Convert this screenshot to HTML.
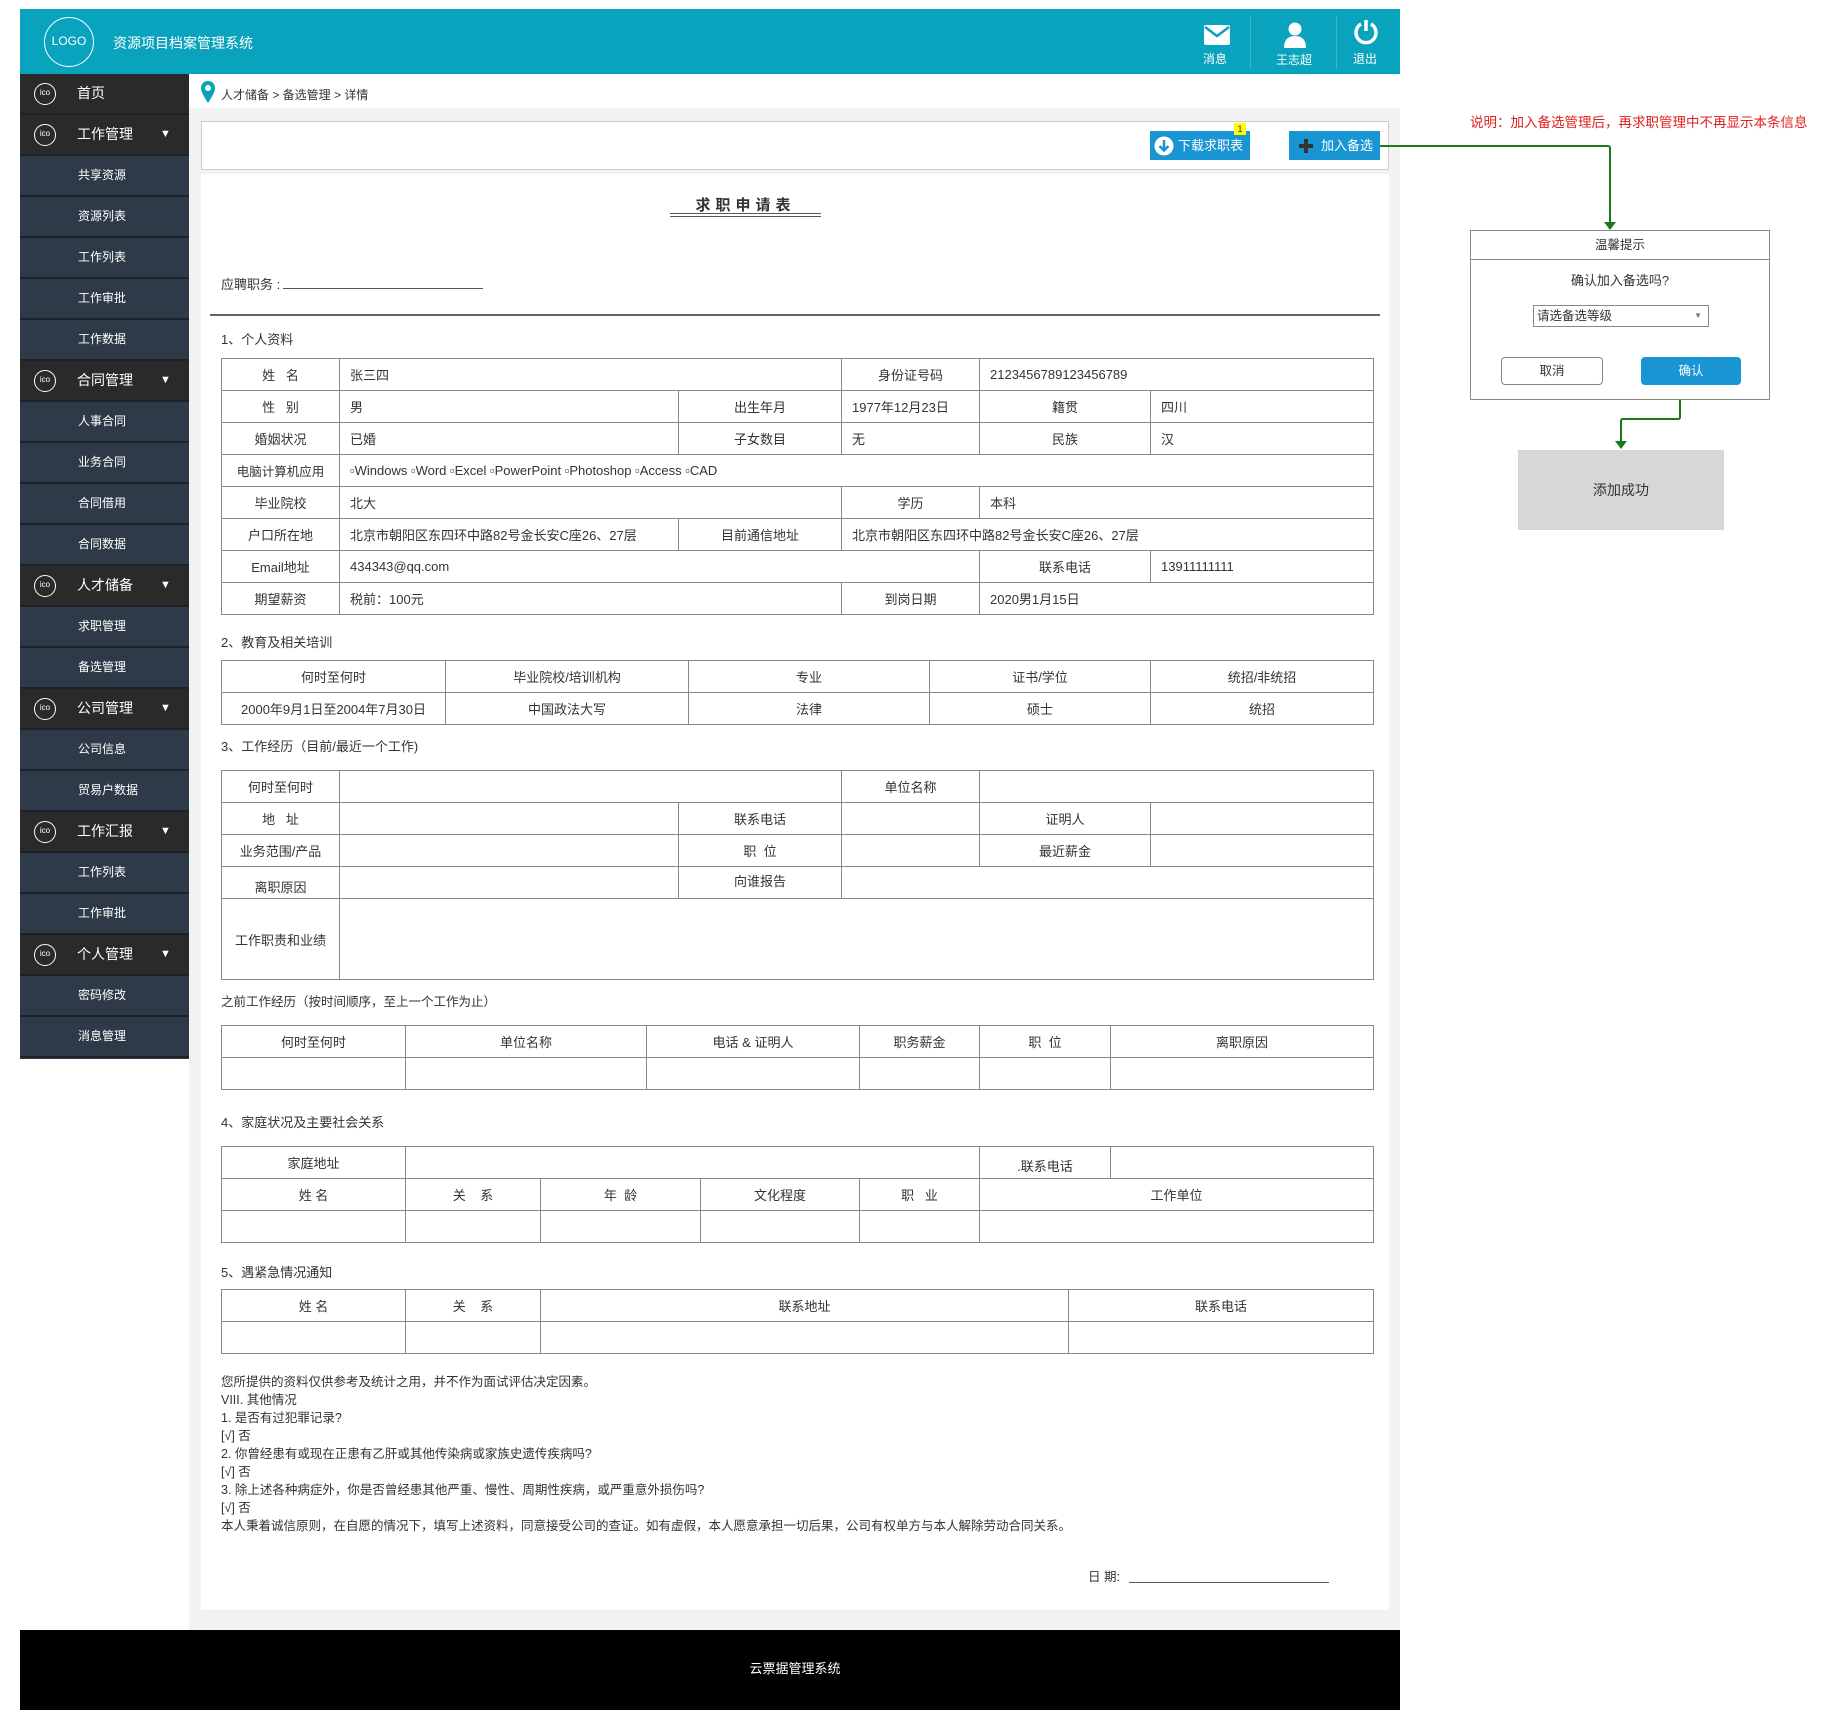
<!DOCTYPE html>
<html><head><meta charset="utf-8">
<style>
*{margin:0;padding:0;box-sizing:border-box}
body{width:1821px;height:1710px;background:#fff;position:relative;font-family:"Liberation Sans","Noto Sans CJK SC",sans-serif;color:#333;overflow:hidden}
.abs{position:absolute}
.hdr{left:20px;top:9px;width:1380px;height:65px;background:#0aa3bd;color:#fff}
.logo{left:24px;top:8px;width:50px;height:50px;border:1.5px solid #fff;border-radius:50%;font-size:12px;text-align:center;line-height:47px}
.side{left:20px;top:74px;width:169px;height:985px;background:#2e3a47}
.side div{height:41px;border-bottom:2px solid #1c2229;color:#fff;font-size:12px;line-height:39px;padding-left:58px;position:relative}
.side div.m{background:#2a2a2a;font-size:14px;padding-left:57px}
.side div.m:before{content:"ico";position:absolute;left:14px;top:9px;width:20px;height:20px;border:1px solid #fff;border-radius:50%;font-size:8px;line-height:18px;text-align:center;padding:0}
.side div.a:after{content:"▼";position:absolute;left:140px;top:0;font-size:11px}
.gray{left:189px;top:108px;width:1211px;height:1522px;background:#f2f2f2}
table{border-collapse:collapse;table-layout:fixed;position:absolute;left:221px;width:1152px;font-size:13px}
td{border:1px solid #888;height:32px;text-align:center;padding:0 4px;white-space:nowrap;overflow:hidden}
td.l{text-align:left;padding-left:10px}
.lbl{position:absolute;left:221px;font-size:13px}
.txt{left:221px;top:1373px;font-size:12.5px;line-height:18px;color:#333}
</style></head><body>
<div class="abs hdr">
 <div class="abs logo">LOGO</div>
 <div class="abs" style="left:93px;top:24px;font-size:14px">资源项目档案管理系统</div>
 <div class="abs" style="left:1230px;top:6px;width:1px;height:54px;background:#3bb6cc"></div>
 <div class="abs" style="left:1316px;top:6px;width:1px;height:54px;background:#3bb6cc"></div>
 <svg class="abs" style="left:1184px;top:16px" width="26" height="20" viewBox="0 0 26 20"><rect x="0" y="0" width="26" height="20" rx="2" fill="#fff"/><path d="M1 2 L13 11 L25 2" stroke="#0aa3bd" stroke-width="2.5" fill="none"/></svg>
 <div class="abs" style="left:1183px;top:41px;font-size:12px">消息</div>
 <svg class="abs" style="left:1263px;top:13px" width="24" height="26" viewBox="0 0 24 26"><circle cx="12" cy="7" r="6.5" fill="#fff"/><path d="M1 26 Q1 14 12 14 Q23 14 23 26Z" fill="#fff"/></svg>
 <div class="abs" style="left:1256px;top:42px;font-size:12px">王志超</div>
 <svg class="abs" style="left:1333px;top:10px" width="26" height="26" viewBox="0 0 26 26"><path d="M8 5 A10 10 0 1 0 18 5" stroke="#fff" stroke-width="3.5" fill="none"/><line x1="13" y1="1" x2="13" y2="12" stroke="#fff" stroke-width="3.5"/></svg>
 <div class="abs" style="left:1333px;top:41px;font-size:12px">退出</div>
</div>
<div class="abs side">
 <div class="m">首页</div><div class="m a">工作管理</div>
 <div>共享资源</div><div>资源列表</div><div>工作列表</div><div>工作审批</div><div>工作数据</div>
 <div class="m a">合同管理</div><div>人事合同</div><div>业务合同</div><div>合同借用</div><div>合同数据</div>
 <div class="m a">人才储备</div><div>求职管理</div><div>备选管理</div>
 <div class="m a">公司管理</div><div>公司信息</div><div>贸易户数据</div>
 <div class="m a">工作汇报</div><div>工作列表</div><div>工作审批</div>
 <div class="m a">个人管理</div><div>密码修改</div><div>消息管理</div>
</div>
<svg class="abs" style="left:201px;top:81px" width="14" height="22" viewBox="0 0 14 22"><path d="M7 0 A7 7 0 0 1 14 7 C14 12 7 22 7 22 C7 22 0 12 0 7 A7 7 0 0 1 7 0Z" fill="#0aa3bd"/><circle cx="7" cy="7" r="3" fill="#fff"/></svg>
<div class="abs" style="left:221px;top:86px;font-size:12px">人才储备 &gt; 备选管理 &gt; 详情</div>
<div class="abs gray"></div>
<div class="abs" style="left:201px;top:121px;width:1188px;height:49px;background:#fff;border:1px solid #ccc"></div>
<div class="abs" style="left:1150px;top:131px;width:100px;height:29px;background:#1a95d3;color:#fff;font-size:13px;line-height:29px;padding-left:28px">下载求职表</div>
<svg class="abs" style="left:1154px;top:136px" width="20" height="20" viewBox="0 0 20 20"><circle cx="10" cy="10" r="9.5" fill="#fff"/><path d="M10 4 V14 M5.5 10 L10 14.5 L14.5 10" stroke="#1a95d3" stroke-width="2.5" fill="none"/></svg>
<div class="abs" style="left:1234px;top:123px;width:12px;height:12px;background:#ff0;font-size:9px;text-align:center;line-height:12px;color:#333">1</div>
<div class="abs" style="left:1289px;top:131px;width:91px;height:29px;background:#1a95d3;color:#fff;font-size:13px;line-height:29px;padding-left:32px">加入备选</div>
<svg class="abs" style="left:1298px;top:138px" width="16" height="16" viewBox="0 0 16 16"><path d="M8 1V15M1 8H15" stroke="#333" stroke-width="4"/></svg>
<div class="abs" style="left:201px;top:174px;width:1188px;height:1436px;background:#fff"></div>
<div class="abs" style="left:670px;top:194px;width:151px;text-align:center;font-size:15px;font-weight:bold;letter-spacing:5px">求职申请表</div>
<div class="abs" style="left:670px;top:213px;width:151px;height:4px;border-top:1px solid #555;border-bottom:1px solid #555"></div>
<div class="lbl" style="top:274px">应聘职务 :</div>
<div class="abs" style="left:283px;top:288px;width:200px;border-top:1px solid #555"></div>
<div class="abs" style="left:210px;top:314px;width:1170px;border-top:2px solid #666"></div>
<div class="lbl" style="top:329px">1、个人资料</div>
<table style="top:358px">
<colgroup><col style="width:118px"><col style="width:339px"><col style="width:163px"><col style="width:138px"><col style="width:171px"><col style="width:223px"></colgroup>
<tr><td>姓&nbsp;&nbsp;&nbsp;名</td><td colspan="2" class="l">张三四</td><td>身份证号码</td><td colspan="2" class="l">2123456789123456789</td></tr>
<tr><td>性&nbsp;&nbsp;&nbsp;别</td><td class="l">男</td><td>出生年月</td><td class="l">1977年12月23日</td><td>籍贯</td><td class="l">四川</td></tr>
<tr><td>婚姻状况</td><td class="l">已婚</td><td>子女数目</td><td class="l">无</td><td>民族</td><td class="l">汉</td></tr>
<tr><td style="font-size:12.5px;padding:0">电脑计算机应用</td><td colspan="5" class="l">▫Windows ▫Word ▫Excel ▫PowerPoint ▫Photoshop ▫Access ▫CAD</td></tr>
<tr><td>毕业院校</td><td colspan="2" class="l">北大</td><td>学历</td><td colspan="2" class="l">本科</td></tr>
<tr><td>户口所在地</td><td class="l">北京市朝阳区东四环中路82号金长安C座26、27层</td><td>目前通信地址</td><td colspan="3" class="l">北京市朝阳区东四环中路82号金长安C座26、27层</td></tr>
<tr><td>Email地址</td><td colspan="3" class="l">434343@qq.com</td><td>联系电话</td><td class="l">13911111111</td></tr>
<tr><td>期望薪资</td><td colspan="2" class="l">税前：100元</td><td>到岗日期</td><td colspan="2" class="l">2020男1月15日</td></tr>
</table>
<div class="lbl" style="top:632px">2、教育及相关培训</div>
<table style="top:660px">
<colgroup><col style="width:224px"><col style="width:243px"><col style="width:241px"><col style="width:221px"><col style="width:223px"></colgroup>
<tr><td>何时至何时</td><td>毕业院校/培训机构</td><td>专业</td><td>证书/学位</td><td>统招/非统招</td></tr>
<tr><td>2000年9月1日至2004年7月30日</td><td>中国政法大写</td><td>法律</td><td>硕士</td><td>统招</td></tr>
</table>
<div class="lbl" style="top:736px">3、工作经历（目前/最近一个工作)</div>
<table style="top:770px">
<colgroup><col style="width:118px"><col style="width:339px"><col style="width:163px"><col style="width:138px"><col style="width:171px"><col style="width:223px"></colgroup>
<tr><td>何时至何时</td><td colspan="2"></td><td>单位名称</td><td colspan="2"></td></tr>
<tr><td>地&nbsp;&nbsp;&nbsp;址</td><td></td><td>联系电话</td><td></td><td>证明人</td><td></td></tr>
<tr><td>业务范围/产品</td><td></td><td>职&nbsp;&nbsp;位</td><td></td><td>最近薪金</td><td></td></tr>
<tr><td style="padding-top:8px">离职原因</td><td></td><td style="vertical-align:top;padding-top:4px">向谁报告</td><td colspan="3"></td></tr>
<tr><td style="height:81px">工作职责和业绩</td><td colspan="5"></td></tr>
</table>
<div class="lbl" style="top:991px;font-size:12.5px">之前工作经历（按时间顺序，至上一个工作为止）</div>
<table style="top:1025px">
<colgroup><col style="width:184px"><col style="width:241px"><col style="width:213px"><col style="width:120px"><col style="width:131px"><col style="width:263px"></colgroup>
<tr><td>何时至何时</td><td>单位名称</td><td>电话 &amp; 证明人</td><td>职务薪金</td><td>职&nbsp;&nbsp;位</td><td>离职原因</td></tr>
<tr><td></td><td></td><td></td><td></td><td></td><td></td></tr>
</table>
<div class="lbl" style="top:1112px">4、家庭状况及主要社会关系</div>
<table style="top:1146px">
<colgroup><col style="width:184px"><col style="width:135px"><col style="width:160px"><col style="width:159px"><col style="width:120px"><col style="width:131px"><col style="width:263px"></colgroup>
<tr><td>家庭地址</td><td colspan="4"></td><td style="padding-top:6px">.联系电话</td><td></td></tr>
<tr><td>姓 名</td><td>关&nbsp;&nbsp;&nbsp;&nbsp;系</td><td>年&nbsp;&nbsp;龄</td><td>文化程度</td><td>职&nbsp;&nbsp;&nbsp;业</td><td colspan="2">工作单位</td></tr>
<tr><td></td><td></td><td></td><td></td><td></td><td colspan="2"></td></tr>
</table>
<div class="lbl" style="top:1262px">5、遇紧急情况通知</div>
<table style="top:1289px">
<colgroup><col style="width:184px"><col style="width:135px"><col style="width:528px"><col style="width:305px"></colgroup>
<tr><td>姓 名</td><td>关&nbsp;&nbsp;&nbsp;&nbsp;系</td><td>联系地址</td><td>联系电话</td></tr>
<tr><td></td><td></td><td></td><td></td></tr>
</table>
<div class="abs txt">您所提供的资料仅供参考及统计之用，并不作为面试评估决定因素。<br>VIII. 其他情况<br>1. 是否有过犯罪记录?<br>[√] 否<br>2. 你曾经患有或现在正患有乙肝或其他传染病或家族史遗传疾病吗?<br>[√] 否<br>3. 除上述各种病症外，你是否曾经患其他严重、慢性、周期性疾病，或严重意外损伤吗?<br>[√] 否<br>本人秉着诚信原则，在自愿的情况下，填写上述资料，同意接受公司的查证。如有虚假，本人愿意承担一切后果，公司有权单方与本人解除劳动合同关系。</div>
<div class="abs" style="left:1088px;top:1566px;font-size:12.5px">日 期:</div>
<div class="abs" style="left:1129px;top:1582px;width:200px;border-top:1px solid #555"></div>
<div class="abs" style="left:20px;top:1630px;width:1380px;height:80px;background:#000"></div>
<div class="abs" style="left:695px;top:1630px;width:200px;height:80px;color:#fff;font-size:13px;text-align:center;line-height:78px">云票据管理系统</div>
<div class="abs" style="left:1470px;top:111px;font-size:13.5px;color:#e02020;white-space:nowrap">说明：加入备选管理后，再求职管理中不再显示本条信息</div>
<svg class="abs" style="left:0;top:0" width="1821" height="1710" viewBox="0 0 1821 1710" pointer-events="none">
<path d="M1380 146 H1608 Q1610 146 1610 148 V222" stroke="#1a7a1a" stroke-width="2" fill="none"/>
<path d="M1604 222 L1616 222 L1610 230Z" fill="#1a7a1a"/>
<path d="M1680 400 V417 Q1680 419 1678 419 H1623 Q1621 419 1621 421 V441" stroke="#1a7a1a" stroke-width="2" fill="none"/>
<path d="M1615 441 L1627 441 L1621 449Z" fill="#1a7a1a"/>
</svg>
<div class="abs" style="left:1470px;top:230px;width:300px;height:170px;border:1px solid #888;background:#fff">
 <div style="height:29px;border-bottom:1px solid #888;text-align:center;line-height:28px;font-size:12.5px">温馨提示</div>
 <div style="text-align:center;font-size:13px;margin-top:10px">确认加入备选吗?</div>
 <div class="abs" style="left:62px;top:74px;width:176px;height:22px;border:1px solid #888;font-size:12.5px;line-height:20px;padding-left:3px">请选备选等级<span style="position:absolute;right:6px;top:0;font-size:8px;color:#777">▼</span></div>
 <div class="abs" style="left:30px;top:126px;width:102px;height:28px;border:1px solid #888;border-radius:4px;text-align:center;line-height:26px;font-size:12.5px">取消</div>
 <div class="abs" style="left:170px;top:126px;width:100px;height:28px;background:#1a95d3;border-radius:4px;text-align:center;line-height:28px;font-size:12.5px;color:#fff">确认</div>
</div>
<div class="abs" style="left:1518px;top:450px;width:206px;height:80px;background:#d7d7d7;text-align:center;line-height:80px;font-size:14px">添加成功</div>
</body></html>
